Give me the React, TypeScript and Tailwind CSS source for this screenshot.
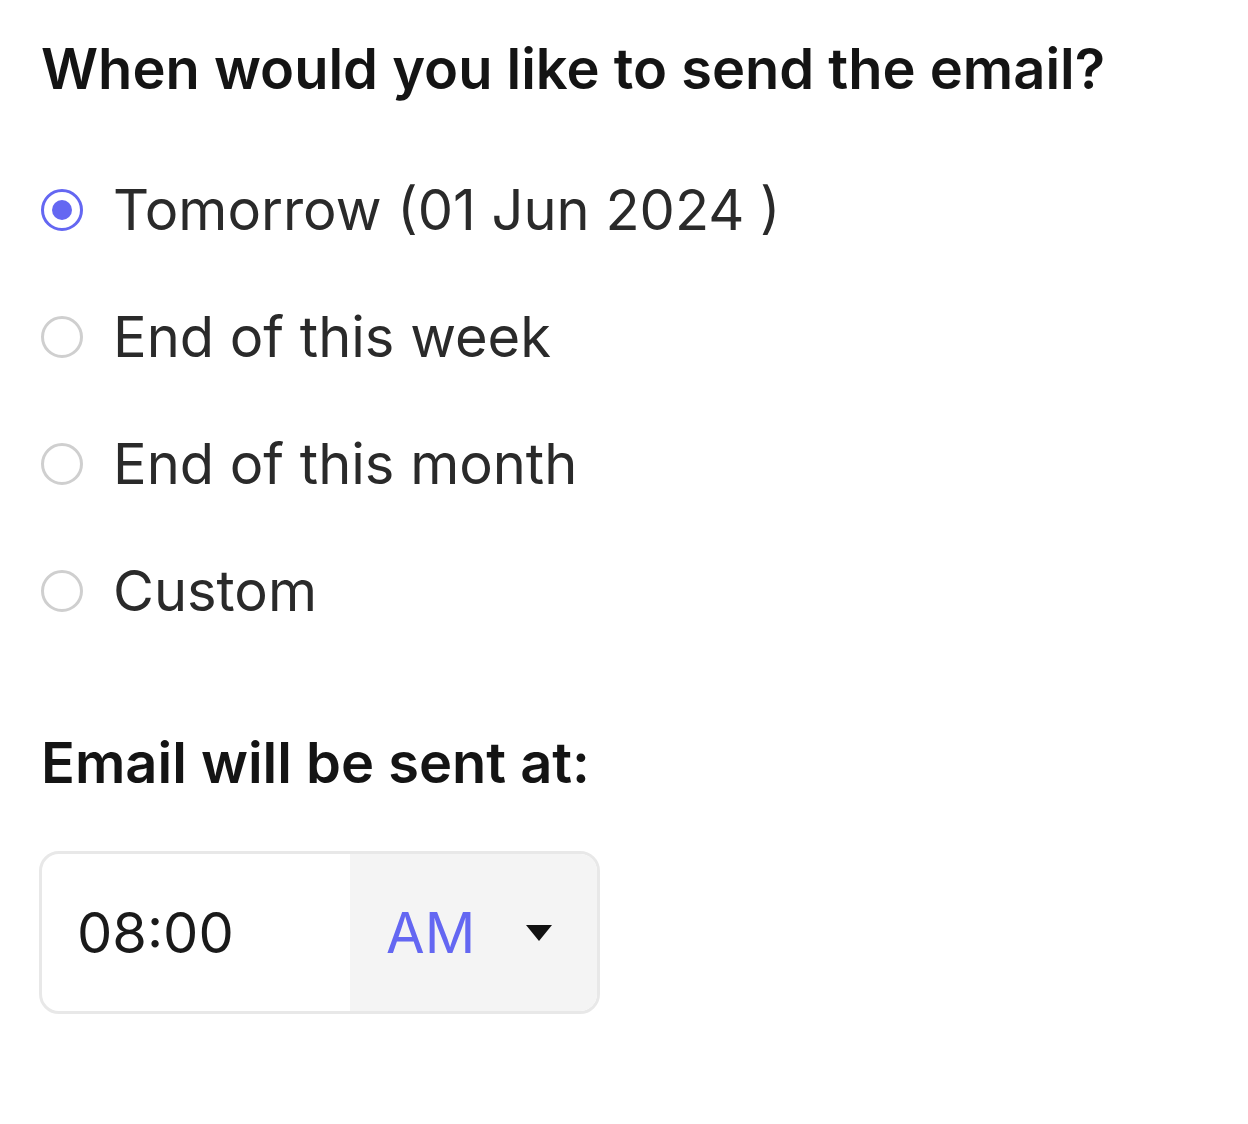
import { useState } from "react";

const options = [
  "Tomorrow (01 Jun 2024 )",
  "End of this week",
  "End of this month",
  "Custom",
];

function Radio({ checked }: { checked: boolean }) {
  return checked ? (
    <span className="flex h-[42px] w-[42px] shrink-0 items-center justify-center rounded-full border-[3px] border-[#6467f2]">
      <span className="h-[20px] w-[20px] rounded-full bg-[#6467f2]" />
    </span>
  ) : (
    <span className="h-[42px] w-[42px] shrink-0 rounded-full border-[3px] border-[#cfcfcf]" />
  );
}

export default function App() {
  const [selected, setSelected] = useState(0);

  return (
    <div
      className="min-h-screen bg-white pl-[41px] pt-[34px] text-[#1a1a1a]"
      style={{ fontFamily: "Inter, 'Noto Sans', sans-serif" }}
    >
      <h2 className="text-[56px] font-semibold leading-[70px] text-[#141414]">
        When would you like to send the email?
      </h2>

      <div className="mt-[71px] flex flex-col gap-[57px]">
        {options.map((label, i) => (
          <label
            key={label}
            className="flex h-[70px] cursor-pointer items-center gap-[30px]"
            onClick={() => setSelected(i)}
          >
            <Radio checked={selected === i} />
            <span className="text-[56px] leading-[70px] text-[#2a2a2a]">
              {label}
            </span>
          </label>
        ))}
      </div>

      <h3 className="mt-[102px] text-[56px] font-semibold leading-[70px] text-[#141414]">
        Email will be sent at:
      </h3>

      <div className="-ml-[2px] mt-[53px] flex h-[163px] w-[561px] overflow-hidden rounded-[20px] border-[3px] border-[#e8e8e8]">
        <div className="flex w-[308px] items-center pl-[35px] text-[56px] text-[#1a1a1a]">
          08:00
        </div>
        <div className="flex flex-1 items-center bg-[#f4f4f4] pl-[36px]">
          <span className="text-[56px] text-[#6467f2]">AM</span>
          <svg
            className="ml-[50px]"
            width="28"
            height="20"
            viewBox="0 0 28 20"
          >
            <path d="M1 2 L27 2 L14 18 Z" fill="#111" />
          </svg>
        </div>
      </div>
    </div>
  );
}
